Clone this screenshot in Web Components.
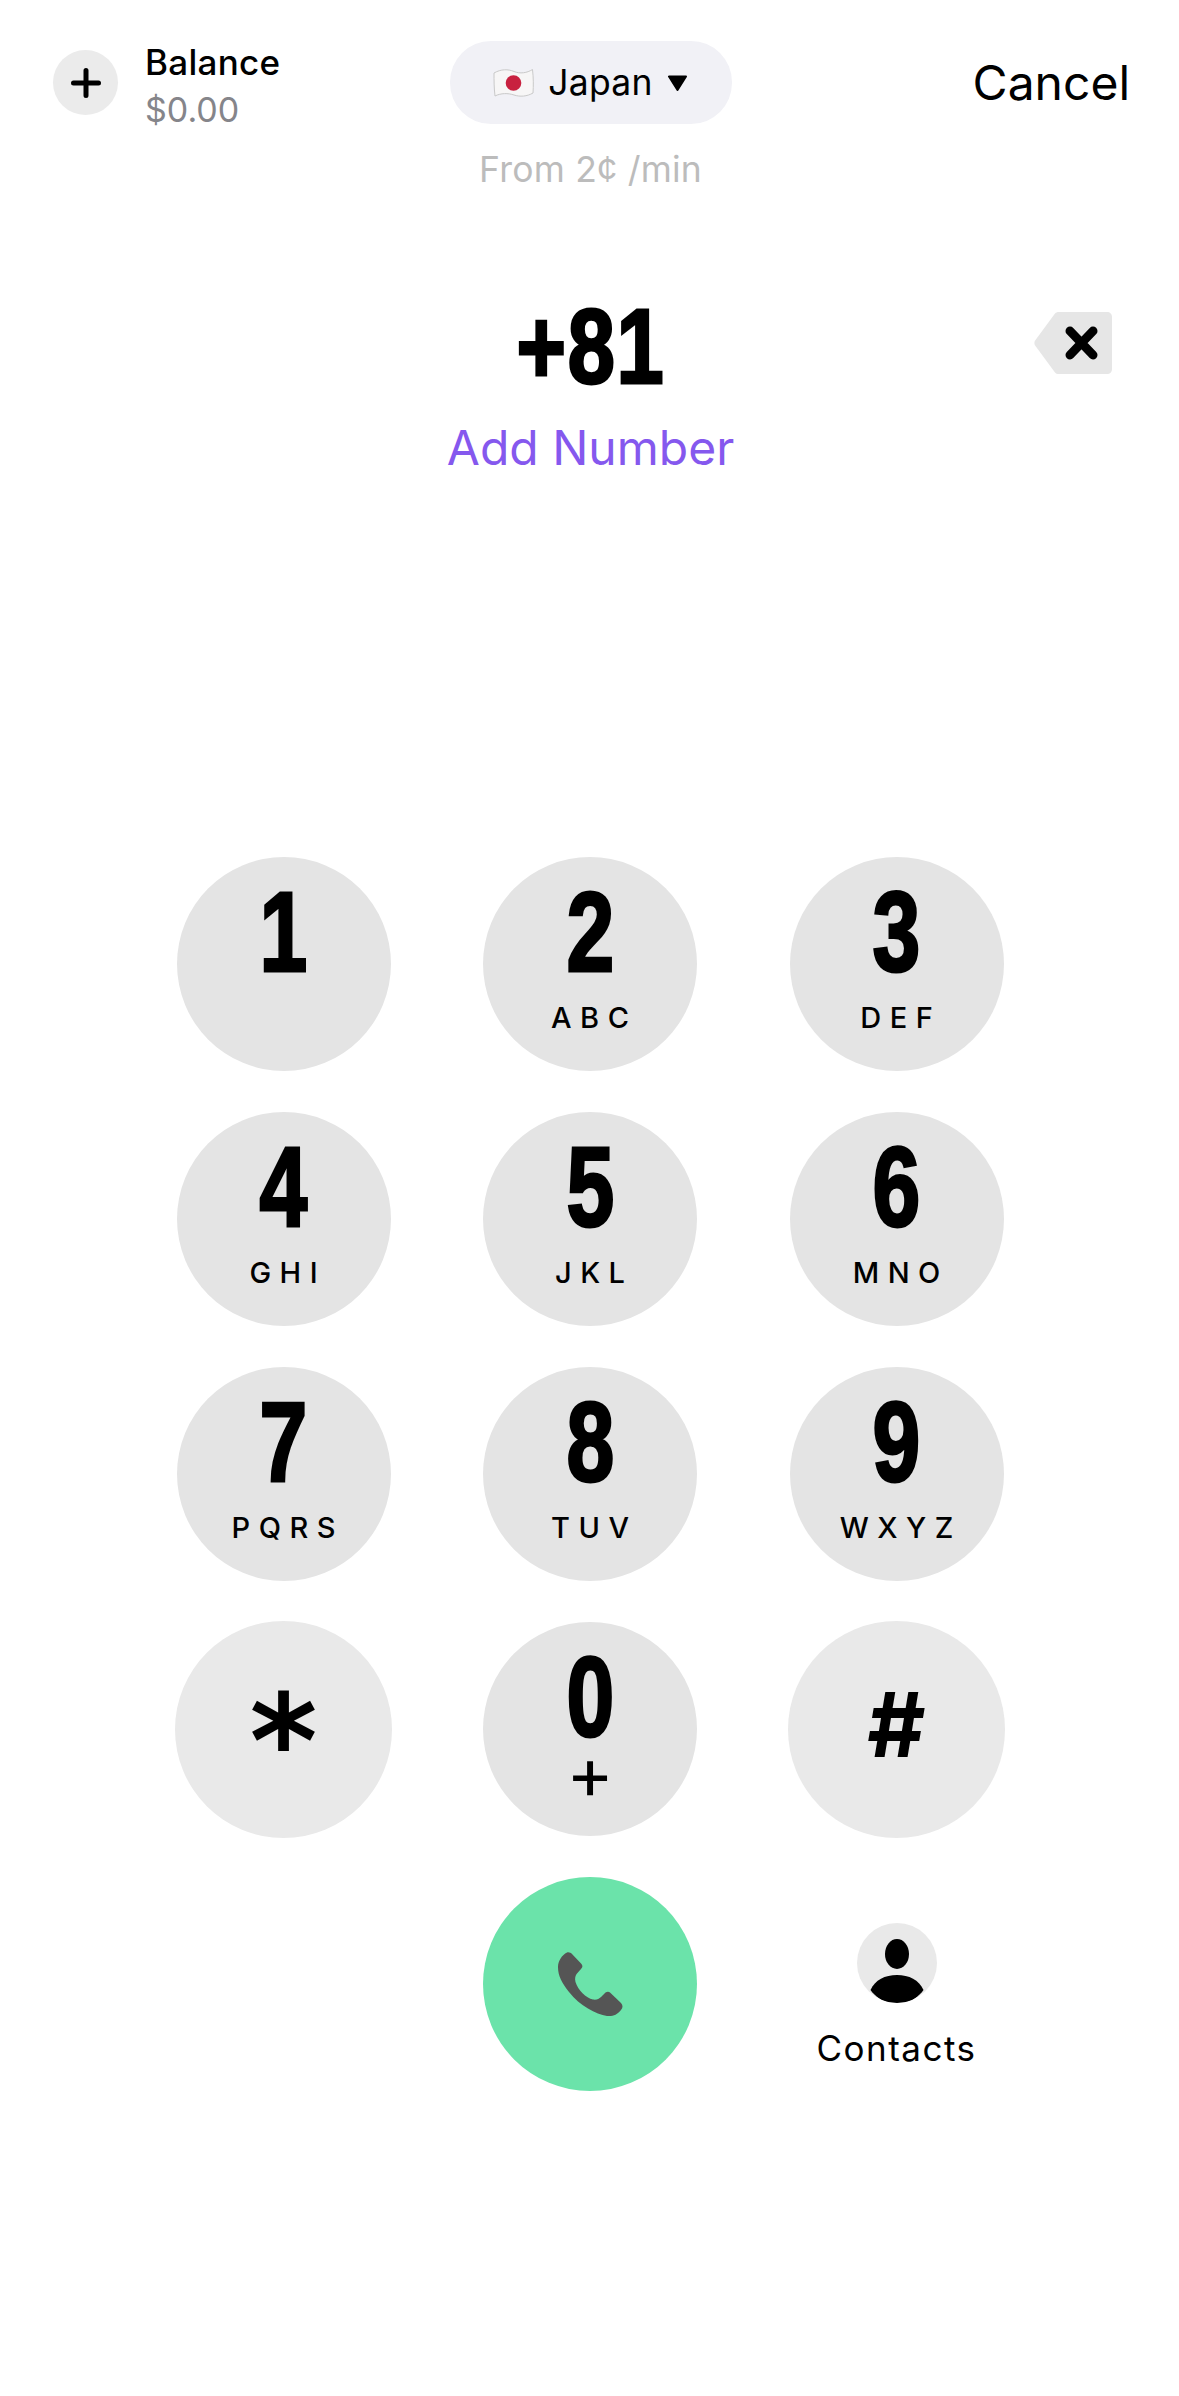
<!DOCTYPE html>
<html lang="en">
<head>
<meta charset="utf-8">
<title>Dialer</title>
<style>
  html, body { margin: 0; background: #fff; }
  body { width: 1179px; height: 2396px; overflow: hidden; font-family: Inter, "Liberation Sans", sans-serif; color: #000; }
</style>
</head>
<body>
<dial-screen>
  <dial-header slot="header">
    <balance-chip amount="$0.00">Balance</balance-chip>
    <country-pill rate="From 2¢ /min">Japan</country-pill>
    <cancel-link>Cancel</cancel-link>
  </dial-header>
  <number-display slot="number" action="Add Number">+81</number-display>
  <dial-pad slot="pad">
    <dial-key>1</dial-key>
    <dial-key letters="ABC">2</dial-key>
    <dial-key letters="DEF">3</dial-key>
    <dial-key letters="GHI">4</dial-key>
    <dial-key letters="JKL">5</dial-key>
    <dial-key letters="MNO">6</dial-key>
    <dial-key letters="PQRS">7</dial-key>
    <dial-key letters="TUV">8</dial-key>
    <dial-key letters="WXYZ">9</dial-key>
    <dial-key kind="star">*</dial-key>
    <dial-key letters="+" kind="zero">0</dial-key>
    <dial-key kind="hash">#</dial-key>
    <span></span>
    <call-button></call-button>
    <contacts-button>Contacts</contacts-button>
  </dial-pad>
</dial-screen>

<script>
const DIGIT_FONT = `"Liberation Sans", sans-serif`;

class DialScreen extends HTMLElement {
  constructor() {
    super();
    this.attachShadow({ mode: "open" });
    this.shadowRoot.innerHTML = `
      <style>
        :host { display: flex; flex-direction: column; width: 1179px; }
        .header { padding-top: 41px; }
        .number { padding-top: 100px; }
        .pad { padding-top: 379px; }
      </style>
      <div class="header"><slot name="header"></slot></div>
      <div class="number"><slot name="number"></slot></div>
      <div class="pad"><slot name="pad"></slot></div>
    `;
  }
}

class DialHeader extends HTMLElement {
  constructor() {
    super();
    this.attachShadow({ mode: "open" });
    this.shadowRoot.innerHTML = `
      <style>
        :host { display: grid; grid-template-columns: 1fr auto 1fr; align-items: start; padding: 0 49px 0 53px; }
        ::slotted(cancel-link) { justify-self: end; }
      </style>
      <slot></slot>
    `;
  }
}

class BalanceChip extends HTMLElement {
  constructor() {
    super();
    this.attachShadow({ mode: "open" });
    this.shadowRoot.innerHTML = `
      <style>
        :host { display: flex; gap: 27px; align-items: flex-start; margin-top: -2px; }
        .plus { width: 65px; height: 65px; margin-top: 11px; border-radius: 50%; background: #ebebeb; display: flex; align-items: center; justify-content: center; }
        .text { display: flex; flex-direction: column; }
        .title { font-size: 35px; line-height: 47px; font-weight: 500; letter-spacing: .3px; }
        .amount { font-size: 34px; line-height: 47px; color: #85858a; }
      </style>
      <div class="plus">
        <svg width="30" height="30" viewBox="0 0 30 30"><path d="M15 2.5v25M2.5 15h25" stroke="#000" stroke-width="5" stroke-linecap="round"/></svg>
      </div>
      <div class="text">
        <span class="title"><slot></slot></span>
        <span class="amount"></span>
      </div>
    `;
    this.shadowRoot.querySelector(".amount").textContent = this.getAttribute("amount") || "";
  }
}

class CountryPill extends HTMLElement {
  constructor() {
    super();
    this.attachShadow({ mode: "open" });
    this.shadowRoot.innerHTML = `
      <style>
        :host { display: flex; flex-direction: column; align-items: center; margin-left: -2px; }
        .pill { width: 282px; height: 83px; box-sizing: border-box; border-radius: 41px; background: #f1f1f6; display: flex; align-items: center; justify-content: center; gap: 14px; font-size: 35.500px; letter-spacing: .3px; }
        .rate { margin-top: 24px; font-size: 35.500px; line-height: 44px; color: #bcbcbc; letter-spacing: .2px; }
      </style>
      <div class="pill">
        <svg width="41" height="30" viewBox="0 0 41 30">
          <path d="M1 5C8 1 15 1 21 3.500S34 5 39.500 1.500C40.500 10 40.500 18 40 25C34 28.500 27 29 21 27S8 25 2 28C1 20 1 12 1 5Z" fill="#f7f6f6" stroke="#c9c9c9" stroke-width="1"/>
          <circle cx="20.500" cy="15" r="7.800" fill="#c8213f"/>
        </svg>
        <span><slot></slot></span>
        <svg width="21" height="16" viewBox="0 0 21 16"><path d="M2 1.500h17L10.500 15Z" fill="#000" stroke="#000" stroke-width="2" stroke-linejoin="round"/></svg>
      </div>
      <div class="rate"></div>
    `;
    this.shadowRoot.querySelector(".rate").textContent = this.getAttribute("rate") || "";
  }
}

class CancelLink extends HTMLElement {
  constructor() {
    super();
    this.attachShadow({ mode: "open" });
    this.shadowRoot.innerHTML = `
      <style>
        :host { display: block; font-size: 48px; line-height: 84px; }
      </style>
      <slot></slot>
    `;
  }
}

class NumberDisplay extends HTMLElement {
  constructor() {
    super();
    this.attachShadow({ mode: "open" });
    this.shadowRoot.innerHTML = `
      <style>
        :host { display: grid; grid-template-columns: 1fr auto 1fr; align-items: center; row-gap: 26px; padding-right: 67px; padding-left: 69px; }
        .value { grid-column: 2; display: inline-block; transform: translateY(4px) scaleX(.8); font-family: ${DIGIT_FONT}; font-weight: 700; font-size: 106px; line-height: 100px; letter-spacing: 2px; -webkit-text-stroke: 3px #000; }
        .del { grid-column: 3; justify-self: end; display: block; margin-top: 2px; }
        .action { grid-column: 1 / -1; text-align: center; font-size: 48px; line-height: 60px; color: #8558ee; }
      </style>
      <span class="value"><slot></slot></span>
      <svg class="del" width="78" height="62" viewBox="0 0 78 62">
        <path d="M21 1.500C22 .5 23 0 25 0H73C76 0 78 2 78 5V57C78 60 76 62 73 62H25C23 62 22 61.500 21 60.500L1.500 34C0 32.500 0 29.500 1.500 28Z" fill="#e6e6e6"/>
        <path d="M36 19L59 43M59 19L36 43" stroke="#000" stroke-width="9" stroke-linecap="round"/>
      </svg>
      <div class="action"></div>
    `;
    this.shadowRoot.querySelector(".action").textContent = this.getAttribute("action") || "";
  }
}

class DialPad extends HTMLElement {
  constructor() {
    super();
    this.attachShadow({ mode: "open" });
    this.shadowRoot.innerHTML = `
      <style>
        :host { display: grid; grid-template-columns: repeat(3, 214px); grid-auto-rows: 214px; column-gap: 92.500px; row-gap: 41px; justify-content: center; padding-left: 1px; }
      </style>
      <slot></slot>
    `;
  }
}

class DialKey extends HTMLElement {
  constructor() {
    super();
    this.attachShadow({ mode: "open" });
    this.shadowRoot.innerHTML = `
      <style>
        :host { display: flex; flex-direction: column; align-items: center; box-sizing: border-box; width: 214px; height: 214px; border-radius: 50%; background: #e4e4e4; padding-top: 27px; justify-self: center; align-self: center; }
        .digit { display: block; transform: scaleX(.76); font-family: ${DIGIT_FONT}; font-weight: 700; font-size: 113px; line-height: 96px; -webkit-text-stroke: 3px #000; }
        .letters { margin-top: 21px; font-size: 29px; line-height: 34px; font-weight: 500; letter-spacing: 8.500px; margin-right: -8.500px; }
        :host([kind="zero"]) .letters { margin-top: 6px; font-size: 72px; line-height: 44px; letter-spacing: 0; margin-right: 0; font-weight: 400; }
        :host([kind="star"]), :host([kind="hash"]) { width: 217px; height: 217px; background: #e9e9e9; padding-top: 0; justify-content: center; }
        :host([kind="star"]) .digit { transform: none; font-family: "DejaVu Sans", sans-serif; font-weight: 700; font-size: 130px; line-height: 100px; -webkit-text-stroke: 0; padding-top: 46px; }
        :host([kind="hash"]) .digit { transform: none; font-family: Inter, sans-serif; font-weight: 700; font-size: 90px; line-height: 100px; -webkit-text-stroke: 0; padding-top: 13px; }
      </style>
      <span class="digit"><slot></slot></span>
      <span class="letters"></span>
    `;
    this.shadowRoot.querySelector(".letters").textContent = this.getAttribute("letters") || "";
  }
}

class CallButton extends HTMLElement {
  constructor() {
    super();
    this.attachShadow({ mode: "open" });
    this.shadowRoot.innerHTML = `
      <style>
        :host { display: flex; align-items: center; justify-content: center; width: 214px; height: 214px; border-radius: 50%; background: #6be3aa; }
      </style>
      <svg width="65" height="65" viewBox="0 0 65 65">
        <path fill="#555" d="M9 .5C11 0 13 1 14 2L23.500 12C25 14 24.500 15.500 23 17L19 21.500C17.500 23.500 16.500 26 17.500 30C20 38 28 46 35 47.500C38.500 48 41 47 43 45L47.500 40.500C49 39.500 51 39.500 52 40.500L63 51C65 53 65 56 63 58C59 63 55 64.500 49 64C38 62 22 54 11 40C4 31 0 24 0 15C0 9 4 3 9 .5Z"/>
      </svg>
    `;
  }
}

class ContactsButton extends HTMLElement {
  constructor() {
    super();
    this.attachShadow({ mode: "open" });
    this.shadowRoot.innerHTML = `
      <style>
        :host { display: flex; flex-direction: column; align-items: center; padding-top: 46px; font-size: 35px; line-height: 44px; letter-spacing: 1.500px; }
        svg { display: block; margin-bottom: 23px; }
      </style>
      <svg width="80" height="80" viewBox="0 0 80 80">
        <defs><clipPath id="c"><circle cx="40" cy="40" r="40"/></clipPath></defs>
        <circle cx="40" cy="40" r="40" fill="#e9e9e9"/>
        <ellipse cx="40" cy="31" rx="12" ry="15" fill="#000"/>
        <path clip-path="url(#c)" d="M13.500 67C18 57 28 52 40 52S62 57 66.500 67C60 76 50 81 40 81S20 76 13.500 67Z" fill="#000"/>
      </svg>
      <slot></slot>
    `;
  }
}

customElements.define("dial-screen", DialScreen);
customElements.define("dial-header", DialHeader);
customElements.define("balance-chip", BalanceChip);
customElements.define("country-pill", CountryPill);
customElements.define("cancel-link", CancelLink);
customElements.define("number-display", NumberDisplay);
customElements.define("dial-pad", DialPad);
customElements.define("dial-key", DialKey);
customElements.define("call-button", CallButton);
customElements.define("contacts-button", ContactsButton);
</script>
</body>
</html>
